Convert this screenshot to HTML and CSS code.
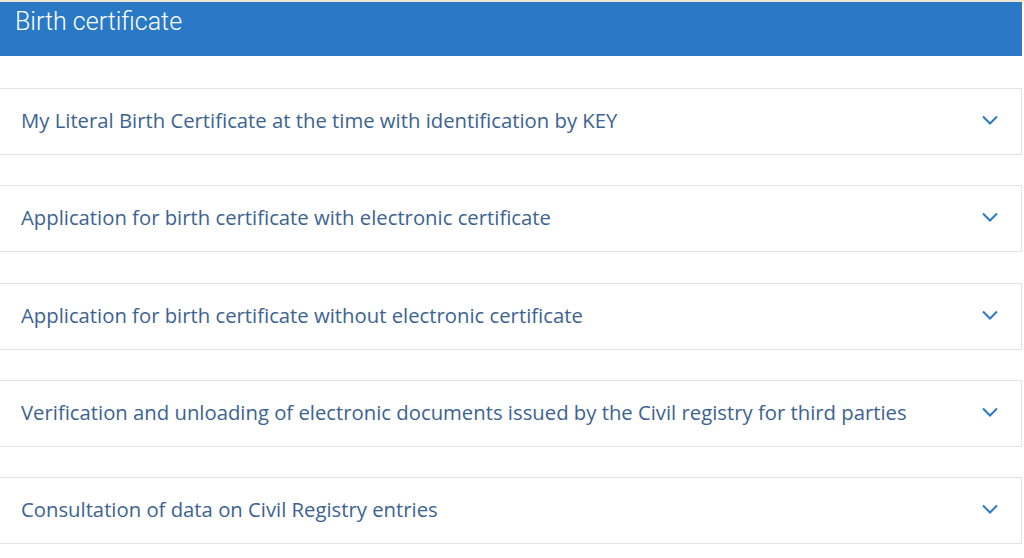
FILE: index.html
```html
<!DOCTYPE html>
<html lang="en">
<head>
<meta charset="utf-8">
<title>Birth certificate</title>
<link rel="stylesheet" href="styles.css">
</head>
<body>
<div class="topline"></div>
<header class="banner">
  <h1 class="banner-title">Birth certificate</h1>
</header>
<main class="list">
  <div class="item">
    <span class="item-text">My Literal Birth Certificate at the time with identification by KEY</span>
    <svg class="chev" width="18" height="10" viewBox="0 0 18 10"><path d="M2 1.5 L9 8.5 L16 1.5" fill="none" stroke="#2a78c8" stroke-width="2"/></svg>
  </div>
  <div class="item">
    <span class="item-text">Application for birth certificate with electronic certificate</span>
    <svg class="chev" width="18" height="10" viewBox="0 0 18 10"><path d="M2 1.5 L9 8.5 L16 1.5" fill="none" stroke="#2a78c8" stroke-width="2"/></svg>
  </div>
  <div class="item">
    <span class="item-text">Application for birth certificate without electronic certificate</span>
    <svg class="chev" width="18" height="10" viewBox="0 0 18 10"><path d="M2 1.5 L9 8.5 L16 1.5" fill="none" stroke="#2a78c8" stroke-width="2"/></svg>
  </div>
  <div class="item">
    <span class="item-text">Verification and unloading of electronic documents issued by the Civil registry for third parties</span>
    <svg class="chev" width="18" height="10" viewBox="0 0 18 10"><path d="M2 1.5 L9 8.5 L16 1.5" fill="none" stroke="#2a78c8" stroke-width="2"/></svg>
  </div>
  <div class="item">
    <span class="item-text">Consultation of data on Civil Registry entries</span>
    <svg class="chev" width="18" height="10" viewBox="0 0 18 10"><path d="M2 1.5 L9 8.5 L16 1.5" fill="none" stroke="#2a78c8" stroke-width="2"/></svg>
  </div>
</main>
</body>
</html>
```
FILE: styles.css
```css
html, body {
  margin: 0;
  padding: 0;
  background: #ffffff;
  overflow: hidden;
}
body {
  width: 1024px;
  height: 558px;
}
.topline {
  height: 2px;
  background: #efe6d6;
}
.banner {
  width: 1022px;
  height: 54px;
  background: #2979c7;
  box-sizing: border-box;
  padding: 5px 0 0 15px;
}
.banner-title {
  margin: 0;
  font-family: Roboto, "Liberation Sans", sans-serif;
  font-weight: 300;
  font-size: 25px;
  line-height: 30px;
  color: #ffffff;
}
.list {
  display: flex;
  flex-direction: column;
  gap: 30.25px;
  padding-top: 32px;
  margin-left: -1px;
}
.item {
  width: 1023px;
  height: 67px;
  box-sizing: border-box;
  border: 1px solid #e3e3e3;
  display: flex;
  align-items: center;
  justify-content: space-between;
  padding: 0 22px 0 21px;
}
.item-text {
  font-family: "Open Sans", "Liberation Sans", sans-serif;
  font-size: 20.3px;
  color: #3c6391;
  line-height: 26px;
  margin-top: -3px;
}
.chev {
  display: block;
  margin-top: -3px;
}
```
